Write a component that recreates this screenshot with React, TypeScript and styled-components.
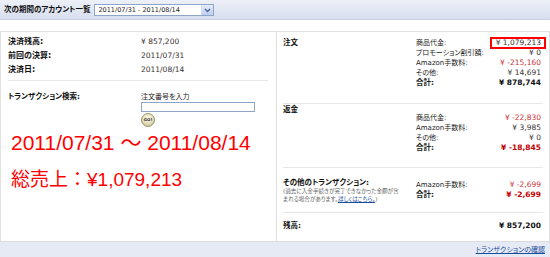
import React from "react";
import styled, { createGlobalStyle } from "styled-components";

const GlobalStyle = createGlobalStyle`
  html, body { margin: 0; padding: 0; background: #fff; }
  body {
    width: 550px;
    height: 257px;
    overflow: hidden;
    font-family: "DejaVu Sans", "Noto Sans CJK JP", sans-serif;
    font-feature-settings: "palt";
    color: #000;
  }
`;

const Page = styled.div`
  width: 550px;
  height: 257px;
  display: flex;
  flex-direction: column;
`;

const HeaderBar = styled.div`
  height: 20px;
  box-sizing: border-box;
  display: flex;
  align-items: center;
  gap: 4px;
  padding: 1px 0 0 4px;
  background: linear-gradient(#edf0f8, #d7deee);
  border-bottom: 1px solid #c8d0e2;
`;

const Title = styled.div`
  font-weight: bold;
  font-size: 7.5px;
  line-height: 10px;
  color: #111;
`;

const SelectBox = styled.div`
  width: 120px;
  height: 12px;
  box-sizing: border-box;
  border: 1px solid #8ea6c6;
  background: #fff;
  display: flex;
  align-items: stretch;
`;

const SelectText = styled.div`
  flex: 1;
  padding-left: 3px;
  font-size: 6.5px;
  line-height: 10px;
  color: #222;
`;

const SelectArrow = styled.div`
  width: 11px;
  background: linear-gradient(#e4ecfc, #bccef4);
  border-left: 1px solid #d0dcf4;
  display: flex;
  align-items: center;
  justify-content: center;
`;

const Panel = styled.div`
  margin-top: 11px;
  height: 210px;
  box-sizing: border-box;
  display: grid;
  grid-template-columns: 275px 1fr;
  border: 1px solid #e2e2e2;
  border-bottom: none;
`;

const LeftCol = styled.div`
  padding: 3px 8px 0 7px;
  display: flex;
  flex-direction: column;
`;

const InfoGrid = styled.div`
  display: grid;
  grid-template-columns: 133px 1fr;
  line-height: 14px;
`;

const InfoLabel = styled.div`
  font-weight: bold;
  font-size: 8px;
  color: #111;
`;

const InfoValue = styled.div`
  font-size: 7.5px;
  color: #3a3330;
`;

const Rule = styled.div`
  height: 1px;
  background: #e6e6e6;
  margin-top: 3px;
`;

const SearchRow = styled.div`
  display: grid;
  grid-template-columns: 133px 1fr;
  margin-top: 11px;
`;

const SearchLabel = styled.div`
  font-weight: bold;
  font-size: 7.5px;
  line-height: 10px;
  color: #111;
`;

const SearchField = styled.div`
  display: flex;
  flex-direction: column;
  align-items: flex-start;
`;

const Hint = styled.div`
  font-size: 7px;
  line-height: 10px;
  color: #222;
`;

const OrderInput = styled.input`
  width: 114px;
  height: 10px;
  box-sizing: border-box;
  border: 1px solid #8ea6c6;
  padding: 0;
  margin: 0;
  outline: none;
`;

const GoButton = styled.button`
  margin-top: 1px;
  width: 14px;
  height: 14px;
  padding: 0;
  border-radius: 50%;
  border: 1px solid #9a9670;
  background: radial-gradient(circle at 50% 35%, #fbf9e8 0%, #e2ddb6 55%, #b7b083 100%);
  font-family: "DejaVu Sans", sans-serif;
  font-size: 4px;
  font-weight: bold;
  color: #333;
  line-height: 12px;
  display: flex;
  align-items: center;
  justify-content: center;
`;

const BigRed = styled.div`
  margin-top: 4px;
  display: flex;
  flex-direction: column;
  gap: 13px;
  font-family: "Liberation Sans", "Noto Sans CJK JP", sans-serif;
  font-feature-settings: normal;
  line-height: 24px;
  color: #ff0000;
  padding-left: 3px;
  white-space: nowrap;
`;

const BigLine = styled.div<{ $size: number }>`
  font-size: ${(p) => p.$size}px;
`;

const RightCol = styled.div`
  border-left: 1px solid #e2e2e2;
  padding: 0 6px;
  display: flex;
  flex-direction: column;
`;

const Section = styled.div<{ $top: number; $bottom: number; $last?: boolean }>`
  display: flex;
  align-items: flex-start;
  padding-top: ${(p) => p.$top}px;
  padding-bottom: ${(p) => p.$bottom}px;
  border-bottom: ${(p) => (p.$last ? "none" : "1px solid #e6e6e6")};
`;

const SectionHead = styled.div`
  width: 133px;
  flex: none;
`;

const HeadTitle = styled.div`
  font-weight: bold;
  font-size: 7.5px;
  line-height: 10px;
  color: #111;
`;

const Note = styled.div`
  font-size: 5.6px;
  line-height: 7.5px;
  color: #666;
`;

const NoteLink = styled.a`
  color: #1a4d9c;
  text-decoration: underline;
`;

const Table = styled.div<{ $offset: number }>`
  flex: 1;
  margin-top: ${(p) => p.$offset}px;
  display: grid;
  grid-template-columns: 1fr auto;
  padding-right: 2px;
  font-size: 7.5px;
  line-height: 10px;
`;

const Cell = styled.div<{ $total?: boolean }>`
  font-weight: ${(p) => (p.$total ? "bold" : "normal")};
  color: #222;
  font-size: ${(p) => (p.$total ? "7.5px" : "7px")};
`;

const Amount = styled.div<{ $tone?: "red" | "plain"; $total?: boolean }>`
  text-align: right;
  font-weight: ${(p) => (p.$total ? "bold" : "normal")};
  color: ${(p) =>
    p.$tone === "red" ? (p.$total ? "#c40000" : "#c8363c") : p.$total ? "#111" : "#3a3330"};
`;

const Highlight = styled.span`
  position: relative;
  display: inline-block;
  &::after {
    content: "";
    position: absolute;
    top: -1px;
    bottom: -1px;
    left: -6px;
    right: -5px;
    border: 2px solid #ff0000;
  }
`;

const Footer = styled.div`
  flex: 1;
  box-sizing: border-box;
  border-top: 1px solid #dcdcdc;
  background: #e6eaf5;
  display: flex;
  align-items: center;
  justify-content: flex-end;
  padding-right: 5px;
`;

const FooterLink = styled.a`
  font-size: 7px;
  line-height: 10px;
  color: #1a4d9c;
  text-decoration: underline;
`;

type Row = { label: string; value: string; tone?: "red" | "plain"; total?: boolean; mark?: boolean };

const orderRows: Row[] = [
  { label: "商品代金:", value: "¥ 1,079,213", mark: true },
  { label: "プロモーション割引額:", value: "¥ 0" },
  { label: "Amazon手数料:", value: "¥ -215,160", tone: "red" },
  { label: "その他:", value: "¥ 14,691" },
  { label: "合計:", value: "¥ 878,744", total: true },
];

const refundRows: Row[] = [
  { label: "商品代金:", value: "¥ -22,830", tone: "red" },
  { label: "Amazon手数料:", value: "¥ 3,985" },
  { label: "その他:", value: "¥ 0" },
  { label: "合計:", value: "¥ -18,845", tone: "red", total: true },
];

const otherRows: Row[] = [
  { label: "Amazon手数料:", value: "¥ -2,699", tone: "red" },
  { label: "合計:", value: "¥ -2,699", tone: "red", total: true },
];

const Rows: React.FC<{ rows: Row[]; offset: number }> = ({ rows, offset }) => (
  <Table $offset={offset}>
    {rows.map((r, i) => (
      <React.Fragment key={i}>
        <Cell $total={r.total}>{r.label}</Cell>
        <Amount $tone={r.tone} $total={r.total}>
          {r.mark ? <Highlight>{r.value}</Highlight> : r.value}
        </Amount>
      </React.Fragment>
    ))}
  </Table>
);

export default function App() {
  return (
    <Page>
      <GlobalStyle />
      <HeaderBar>
        <Title>次の期間のアカウント一覧</Title>
        <SelectBox>
          <SelectText>2011/07/31 - 2011/08/14</SelectText>
          <SelectArrow>
            <svg width="7" height="5" viewBox="0 0 7 5">
              <path d="M1 1 L3.5 3.5 L6 1" fill="none" stroke="#4d6185" strokeWidth="1.3" />
            </svg>
          </SelectArrow>
        </SelectBox>
      </HeaderBar>

      <Panel>
        <LeftCol>
          <InfoGrid>
            <InfoLabel>決済残高:</InfoLabel>
            <InfoValue>¥ 857,200</InfoValue>
            <InfoLabel>前回の決算:</InfoLabel>
            <InfoValue>2011/07/31</InfoValue>
            <InfoLabel>決済日:</InfoLabel>
            <InfoValue>2011/08/14</InfoValue>
          </InfoGrid>
          <Rule />
          <SearchRow>
            <SearchLabel>トランザクション検索:</SearchLabel>
            <SearchField>
              <Hint>注文番号を入力</Hint>
              <OrderInput type="text" />
              <GoButton type="button">GO!</GoButton>
            </SearchField>
          </SearchRow>
          <BigRed>
            <BigLine $size={21}>2011/07/31 ～ 2011/08/14</BigLine>
            <BigLine $size={19}>総売上：¥1,079,213</BigLine>
          </BigRed>
        </LeftCol>

        <RightCol>
          <Section $top={6} $bottom={15}>
            <SectionHead>
              <HeadTitle>注文</HeadTitle>
            </SectionHead>
            <Rows rows={orderRows} offset={0} />
          </Section>
          <Section $top={1} $bottom={14}>
            <SectionHead>
              <HeadTitle>返金</HeadTitle>
            </SectionHead>
            <Rows rows={refundRows} offset={8} />
          </Section>
          <Section $top={10} $bottom={9}>
            <SectionHead>
              <HeadTitle>その他のトランザクション:</HeadTitle>
              <Note>
                (過去に入金手続きが完了できなかった金額が含
                <br />
                まれる場合があります。<NoteLink href="#">詳しくはこちら。</NoteLink>)
              </Note>
            </SectionHead>
            <Rows rows={otherRows} offset={2} />
          </Section>
          <Section $top={8} $bottom={0} $last>
            <SectionHead>
              <HeadTitle>残高:</HeadTitle>
            </SectionHead>
            <Rows rows={[{ label: "", value: "¥ 857,200", total: true }]} offset={0} />
          </Section>
        </RightCol>
      </Panel>

      <Footer>
        <FooterLink href="#">トランザクションの確認</FooterLink>
      </Footer>
    </Page>
  );
}
